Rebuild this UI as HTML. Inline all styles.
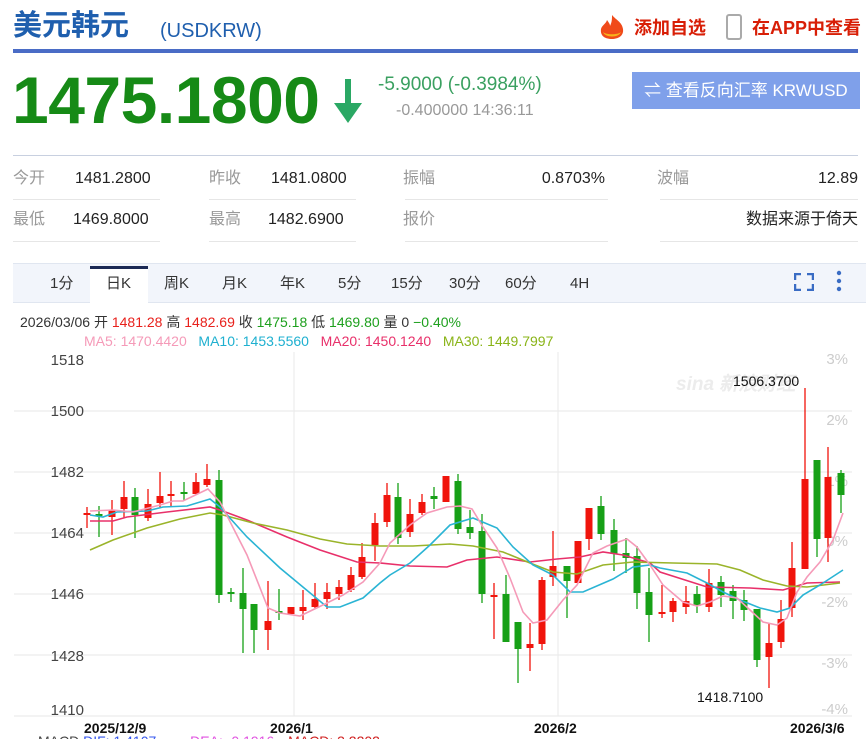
<!DOCTYPE html>
<html><head><meta charset="utf-8">
<style>
*{margin:0;padding:0;box-sizing:border-box}
body{width:866px;height:739px;overflow:hidden;background:#fff;font-family:"Liberation Sans","Noto Sans CJK SC",sans-serif;position:relative}
.a{position:absolute;white-space:nowrap}
.lbl{color:#999;font-size:16px;line-height:20px}
.val{color:#222;font-size:16px;line-height:20px}
.tb span{line-height:20px}
</style></head><body>
<div class="a" style="left:13px;top:8px;font-size:29px;line-height:36px;font-weight:bold;color:#1f5fae">美元韩元</div>
<div class="a" style="left:160px;top:20px;font-size:20px;color:#1f5fae">(USDKRW)</div>
<svg class="a" style="left:598px;top:14px" width="28" height="26" viewBox="0 0 28 26"><path d="M14 1 C18 6 24 8 25 15 C26 22 20 25 14 25 C7 25 2 22 3 15 C4 11 8 10 9 6 C11 9 12 10 12 12 C14 8 14 5 14 1Z" fill="#f04a1a"/><path d="M5 18 C7 24 21 24 23 18 C20 21 8 21 5 18Z" fill="#f7b21a"/></svg>
<div class="a" style="left:634px;top:16px;font-size:18px;line-height:24px;font-weight:bold;color:#d81e06">添加自选</div>
<div class="a" style="left:726px;top:14px;width:16px;height:26px;border:2px solid #aaa;border-radius:3px"></div>
<div class="a" style="left:752px;top:16px;font-size:18px;line-height:24px;font-weight:bold;color:#d81e06">在APP中查看</div>
<div class="a" style="left:13px;top:49px;width:845px;height:4px;background:#4a6cc6"></div>

<div class="a" style="left:12px;top:64px;font-size:66px;line-height:72px;font-weight:bold;color:#168a16;letter-spacing:-0.5px">1475.1800</div>
<svg class="a" style="left:332px;top:77px" width="32" height="48" viewBox="0 0 32 48"><rect x="13" y="2" width="6" height="34" fill="#2aa864"/><path d="M2 26 L16 46 L30 26 Z" fill="#2aa864"/></svg>
<div class="a" style="left:378px;top:74px;font-size:19px;color:#3aa060">-5.9000 (-0.3984%)</div>
<div class="a" style="left:396px;top:102px;font-size:16px;color:#999">-0.400000 14:36:11</div>
<div class="a" style="left:632px;top:72px;width:228px;height:37px;background:#7fa0ea;color:#fff;font-size:17px;line-height:37px;padding-left:12px">⇌ 查看反向汇率 KRWUSD</div>

<div class="a" style="left:13px;top:155px;width:845px;height:1px;background:#c8d0e0"></div>
<div class="a lbl" style="left:13px;top:169px">今开</div><div class="a val" style="left:75px;top:169px">1481.2800</div>
<div class="a lbl" style="left:209px;top:169px">昨收</div><div class="a val" style="left:271px;top:169px">1481.0800</div>
<div class="a lbl" style="left:403px;top:169px">振幅</div><div class="a val" style="right:261px;top:169px">0.8703%</div>
<div class="a lbl" style="left:657px;top:169px">波幅</div><div class="a val" style="right:8px;top:169px">12.89</div>
<div class="a lbl" style="left:13px;top:210px">最低</div><div class="a val" style="left:73px;top:210px">1469.8000</div>
<div class="a lbl" style="left:209px;top:210px">最高</div><div class="a val" style="left:268px;top:210px">1482.6900</div>
<div class="a lbl" style="left:403px;top:210px">报价</div><div class="a val" style="right:8px;top:210px">数据来源于倚天</div>
<div class="a" style="left:13px;top:199px;width:147px;height:1px;background:#e6e6e6"></div>
<div class="a" style="left:209px;top:199px;width:147px;height:1px;background:#e6e6e6"></div>
<div class="a" style="left:405px;top:199px;width:203px;height:1px;background:#e6e6e6"></div>
<div class="a" style="left:660px;top:199px;width:198px;height:1px;background:#e6e6e6"></div>
<div class="a" style="left:13px;top:241px;width:147px;height:1px;background:#e6e6e6"></div>
<div class="a" style="left:209px;top:241px;width:147px;height:1px;background:#e6e6e6"></div>
<div class="a" style="left:405px;top:241px;width:203px;height:1px;background:#e6e6e6"></div>
<div class="a" style="left:660px;top:241px;width:198px;height:1px;background:#e6e6e6"></div>

<div class="a" style="left:13px;top:263px;width:853px;height:40px;background:#f2f5fb;border-top:1px solid #e0e6f0;border-bottom:1px solid #e0e6f0"></div>
<div class="a" style="left:90px;top:266px;width:58px;height:37px;background:#fff;border-top:3px solid #1c2a55"></div>
<div class="a tb" style="top:274px;left:0;font-size:15px;color:#333;width:866px;height:20px">
<span class="a" style="left:50px">1分</span><span class="a" style="left:106px">日K</span><span class="a" style="left:164px">周K</span><span class="a" style="left:222px">月K</span><span class="a" style="left:280px">年K</span><span class="a" style="left:338px">5分</span><span class="a" style="left:391px">15分</span><span class="a" style="left:449px">30分</span><span class="a" style="left:505px">60分</span><span class="a" style="left:570px">4H</span></div>
<svg class="a" style="left:794px;top:273px" width="20" height="18" viewBox="0 0 20 18" fill="none" stroke="#3a6cc4" stroke-width="2.5"><path d="M1 7V1H7M13 1H19V7M19 11V17H13M7 17H1V11"/></svg>
<svg class="a" style="left:836px;top:270px" width="6" height="22"><circle cx="3" cy="3" r="2.2" fill="#3a6cc4"/><circle cx="3" cy="11" r="2.2" fill="#3a6cc4"/><circle cx="3" cy="19" r="2.2" fill="#3a6cc4"/></svg>

<div class="a" style="left:20px;top:312px;font-size:14px;color:#333">2026/03/06 开 <span style="color:#e8211c">1481.28</span> 高 <span style="color:#e8211c">1482.69</span> 收 <span style="color:#1ea01e">1475.18</span> 低 <span style="color:#1ea01e">1469.80</span> 量 0 <span style="color:#1ea01e">−0.40%</span></div>
<div class="a" style="left:84px;top:333px;font-size:14px"><span style="color:#f59ab8">MA5: 1470.4420</span>&nbsp;&nbsp; <span style="color:#1fb0d0">MA10: 1453.5560</span>&nbsp;&nbsp; <span style="color:#e8306a">MA20: 1450.1240</span>&nbsp;&nbsp; <span style="color:#8ab418">MA30: 1449.7997</span></div>

<svg id="ch" class="a" style="left:0;top:345px" width="866" height="394" viewBox="0 345 866 394" font-family="Liberation Sans, sans-serif">
<g stroke="#ececec" stroke-width="1.2">
<line x1="14" y1="411" x2="852" y2="411"/><line x1="14" y1="472" x2="852" y2="472"/><line x1="14" y1="533" x2="852" y2="533"/><line x1="14" y1="594" x2="852" y2="594"/><line x1="14" y1="655" x2="852" y2="655"/><line x1="14" y1="716" x2="852" y2="716"/>
<line x1="294" y1="352" x2="294" y2="716"/><line x1="558" y1="352" x2="558" y2="716"/>
</g>
<g font-size="15" fill="#444" text-anchor="end">
<text x="84" y="365">1518</text><text x="84" y="416">1500</text><text x="84" y="477">1482</text><text x="84" y="538">1464</text><text x="84" y="599">1446</text><text x="84" y="661">1428</text><text x="84" y="715">1410</text></g>
<g font-size="15" fill="#ccc" text-anchor="end">
<text x="848" y="364">3%</text><text x="848" y="425">2%</text><text x="848" y="486">1%</text><text x="848" y="546">0%</text><text x="848" y="607">-2%</text><text x="848" y="668">-3%</text><text x="848" y="714">-4%</text></g>
<text x="676" y="390" font-size="19" font-style="italic" font-weight="bold" fill="#ececec">sina 新浪财经</text>
<g id="cd"></g>
<g fill="none" stroke-width="1.6">
<polyline stroke="#e8306a" points="90,521 113,521 127,517 167,512 210,507 220,510 247,520 287,537 320,550 357,562 380,563 410,566 447,567 467,560 497,557 530,562 557,559 580,557 603,552 623,555 650,563 660,572 707,587 750,588 783,590 807,583 840,582"/>
<polyline stroke="#9ab42a" points="90,550 113,540 147,528 180,519 210,513 223,515 253,523 287,530 320,539 347,544 380,546 413,546 450,544 473,546 503,552 530,563 553,572 577,574 603,565 633,562 673,563 717,564 740,570 763,580 787,586 807,587 840,583"/>
<polyline stroke="#2ab4d4" points="90,515 103,517 117,512 147,511 163,507 187,506 210,499 220,507 247,537 280,568 327,607 340,607 363,598 380,583 390,575 410,563 430,545 450,525 473,518 497,528 513,547 533,565 553,575 570,592 583,592 613,579 633,567 650,565 660,568 687,573 707,583 723,592 740,600 760,608 777,612 790,608 803,595 820,585 843,570"/>
<polyline stroke="#f59ab8" points="90,511 113,510 133,512 160,505 173,501 183,501 208,489 220,502 247,555 268,608 280,613 300,616 327,603 343,595 363,582 380,563 390,543 410,525 427,513 447,507 460,506 472,509 483,527 497,548 510,578 523,612 533,623 547,620 563,600 577,585 593,553 607,546 627,539 637,547 650,565 663,585 683,602 697,606 710,602 723,596 737,598 750,610 763,622 777,625 787,618 797,592 807,577 820,562 833,540 843,513"/>
</g>
<text x="733" y="386" font-size="14" fill="#111">1506.3700</text>
<text x="697" y="702" font-size="14" fill="#111">1418.7100</text>
<g font-size="14" fill="#111" font-weight="bold"><text x="84" y="733">2025/12/9</text><text x="270" y="733">2026/1</text><text x="534" y="733">2026/2</text><text x="790" y="733">2026/3/6</text></g>
<text x="38" y="746" font-size="14"><tspan fill="#444">MACD</tspan> <tspan fill="#3355ee">DIF: 1.4107</tspan>    <tspan fill="#e050e0" dx="30">DEA: -0.1916</tspan>  <tspan fill="#d02020" dx="10">MACD: 3.2202</tspan></text>
</svg>
<script>
var d=[[87,513,515,507,528,1],[99,514,516,506,537,0],[112,510,517,500,535,1],[124,497,509,481,518,1],[135,497,515,488,538,0],[148,504,518,489,521,1],[160,496,503,472,507,1],[171,494,496,481,506,1],[184,492,494,482,501,0],[196,482,494,473,495,1],[207,479,485,464,487,1],[219,480,595,470,603,0],[231,592,594,588,602,0],[243,593,609,568,653,0],[254,604,630,604,653,0],[268,621,630,581,650,1],[279,611,613,589,620,0],[291,607,614,607,614,1],[303,607,611,590,620,1],[315,599,607,583,608,1],[327,592,599,583,609,1],[339,587,594,580,600,1],[351,575,590,567,592,1],[362,557,577,543,579,1],[375,523,545,513,561,1],[387,495,522,483,527,1],[398,497,538,483,544,0],[410,514,532,499,537,1],[422,502,513,494,515,1],[434,496,499,487,509,0],[446,476,502,476,502,1],[458,481,529,474,534,0],[470,527,533,510,539,0],[482,531,594,514,603,0],[494,595,597,583,639,1],[506,594,642,575,642,0],[518,622,649,622,683,0],[530,644,648,623,671,1],[542,580,644,577,650,1],[553,566,577,531,586,1],[567,566,581,566,618,0],[578,541,583,541,583,1],[589,508,539,508,550,1],[601,506,534,496,540,0],[614,530,554,519,571,0],[626,553,558,538,573,0],[637,556,593,546,609,0],[649,592,615,568,642,0],[662,612,614,585,618,1],[673,601,612,598,622,1],[686,601,607,586,614,1],[697,594,606,586,613,0],[709,583,607,569,612,1],[721,582,595,576,607,0],[733,591,601,585,619,0],[744,600,610,590,621,0],[757,609,660,609,667,0],[769,643,657,624,688,1],[781,619,642,600,648,1],[792,568,608,542,617,1],[805,479,569,388,569,1],[817,460,539,460,557,0],[828,477,538,447,562,1],[841,473,495,470,513,0]];
var s='';d.forEach(function(c){var col=c[5]?'#f0140c':'#17a017';s+='<line x1="'+c[0]+'" y1="'+c[3]+'" x2="'+c[0]+'" y2="'+c[4]+'" stroke="'+col+'" stroke-width="1.3"/><rect x="'+(c[0]-3.5)+'" y="'+c[1]+'" width="7" height="'+Math.max(2,c[2]-c[1])+'" fill="'+col+'"/>';});
document.getElementById('cd').innerHTML=s;
</script>
</body></html>
